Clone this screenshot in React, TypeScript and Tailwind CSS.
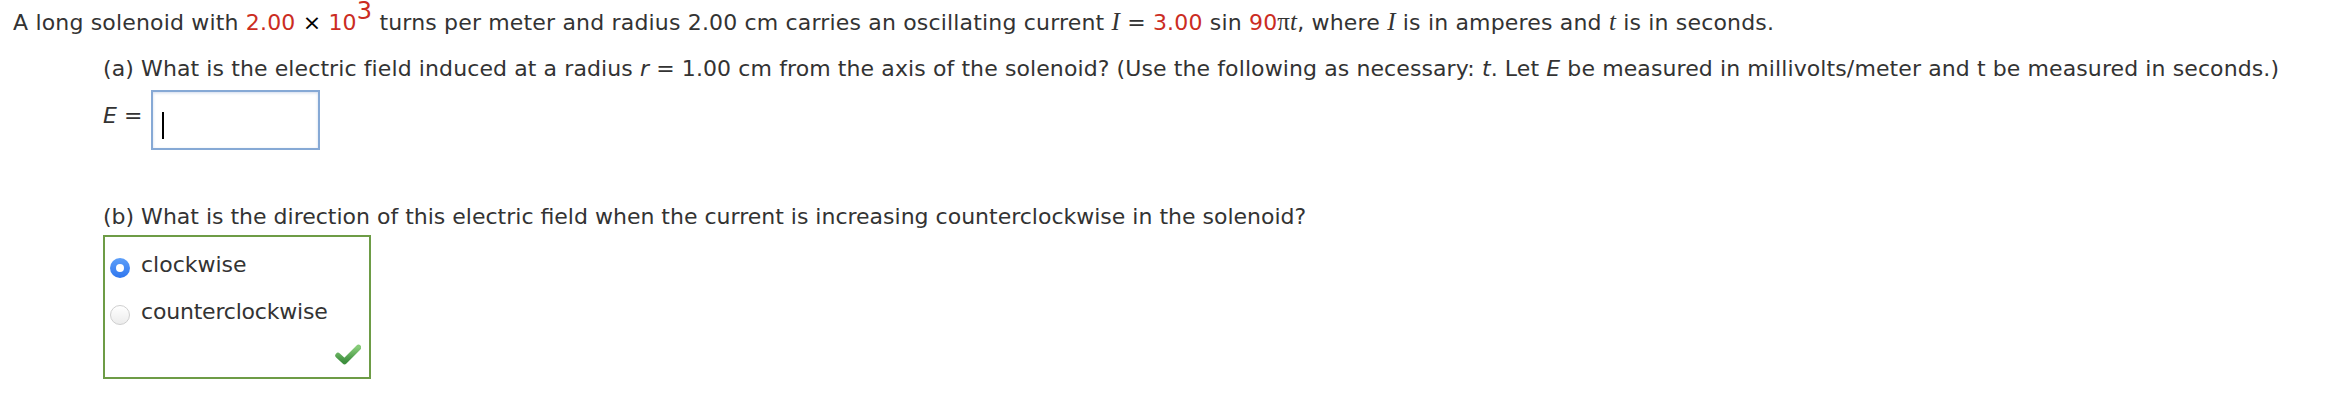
const red = "text-[#cb2c22]";

function Radio({ checked }: { checked: boolean }) {
  if (checked) {
    return (
      <span className="mt-[9px] flex h-[20px] w-[20px] shrink-0 items-center justify-center rounded-full bg-gradient-to-b from-[#5d9ff9] to-[#2f76ee]">
        <span className="h-[8px] w-[8px] rounded-full bg-white" />
      </span>
    );
  }
  return (
    <span className="mt-[9px] h-[20px] w-[20px] shrink-0 rounded-full border border-[#cfcfcf] bg-gradient-to-b from-white to-[#ececec]" />
  );
}

function Check() {
  return (
    <svg width="26" height="21" viewBox="0 0 26 21">
      <defs>
        <linearGradient id="chk" x1="0" y1="0" x2="0" y2="1">
          <stop offset="0" stopColor="#86cb78" />
          <stop offset="1" stopColor="#3e8f3e" />
        </linearGradient>
      </defs>
      <path
        d="M3 11.5 L9.5 17.5 L23.5 3.5"
        fill="none"
        stroke="url(#chk)"
        strokeWidth="5.5"
        strokeLinejoin="round"
        strokeLinecap="round"
      />
    </svg>
  );
}

export default function App() {
  return (
    <main className="min-h-[410px] w-[2338px] bg-white pl-[13px] pt-[6px] font-['DejaVu_Sans',sans-serif] text-[22px] leading-[32px] text-[#333333]">
      {/* ===== PROBLEM STATEMENT ===== */}
      <p className="whitespace-nowrap tracking-[0.17px]">
        A long solenoid with <span className={red}>2.00</span>{" "}
        <span className="text-black">×</span>{" "}
        <span className={red}>
          10<sup className="top-[-11px] text-[24px]">3</sup>
        </span>{" "}
        turns per meter and radius 2.00 cm carries an oscillating current{" "}
        <i className="font-['Liberation_Serif',serif] text-[25px]">I</i> ={" "}
        <span className={red}>3.00</span> sin <span className={red}>90</span>
        <span className="font-['Liberation_Serif',serif] text-[25px]">
          π<i>t</i>
        </span>
        , where <i className="font-['Liberation_Serif',serif] text-[25px]">I</i>{" "}
        is in amperes and{" "}
        <i className="font-['Liberation_Serif',serif] text-[25px]">t</i> is in
        seconds.
      </p>

      <div className="ml-[90px]">
        {/* ===== PART A ===== */}
        <p className="mt-[14px] whitespace-nowrap tracking-[0.1px]">
          (a) What is the electric field induced at a radius <i>r</i> = 1.00 cm
          from the axis of the solenoid? (Use the following as necessary:{" "}
          <i>t</i>. Let <i>E</i> be measured in millivolts/meter and t be
          measured in seconds.)
        </p>

        <div className="mt-[5px] flex items-start">
          <span className="mt-[10px] whitespace-nowrap">
            <i>E</i> =
          </span>
          <div className="ml-[9px] h-[60px] w-[169px] border-2 border-[#86a9d5] pl-[9px] pt-[20px] shadow-[inset_0_1px_3px_rgba(120,150,200,0.35)]">
            <div className="h-[27px] w-[2px] bg-black" />
          </div>
        </div>

        {/* ===== PART B ===== */}
        <p className="mt-[51px] whitespace-nowrap">
          (b) What is the direction of this electric field when the current is
          increasing counterclockwise in the solenoid?
        </p>

        <div className="mt-[2px] flex h-[144px] w-[268px] flex-col border-2 border-[#6d9c46] pl-[5px] pt-[12px]">
          <div className="flex items-start gap-[11px]">
            <Radio checked />
            <span>clockwise</span>
          </div>
          <div className="mt-[15px] flex items-start gap-[11px]">
            <Radio checked={false} />
            <span className="tracking-[-0.2px]">counterclockwise</span>
          </div>
          <div className="mt-[16px] flex justify-end pr-[8px]">
            <Check />
          </div>
        </div>
      </div>
    </main>
  );
}
